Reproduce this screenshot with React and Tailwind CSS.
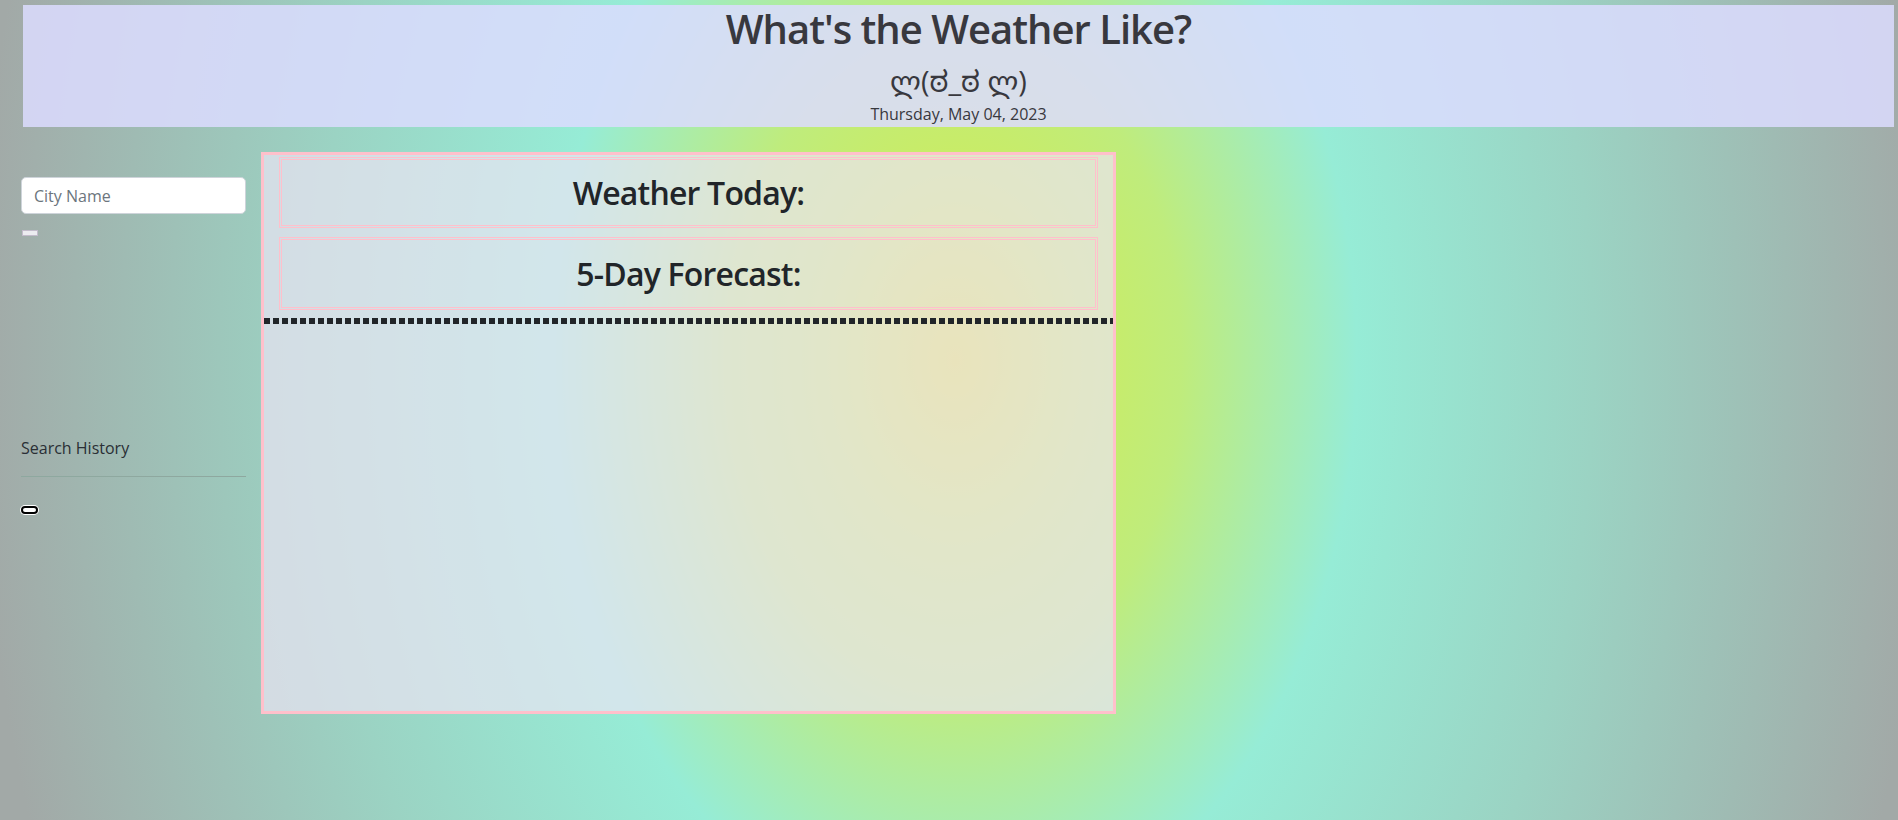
import { useState } from "react";

// fundo: elipse radial amarelo -> água -> cinza
const FUNDO =
  "bg-[radial-gradient(ellipse_1030px_1500px_at_955px_360px,#e4e23a_0%,#c9ec66_13%,#bfec7c_22%,#96ecd6_39%,#9bd3c3_62%,#a2a9a7_95%)]";

export default function App() {
  const [cidade, setCidade] = useState("");

  return (
    <div className={`min-h-[820px] w-full overflow-hidden font-['Open_Sans','Noto_Sans',sans-serif] ${FUNDO}`}>
      {/* Cabeçalho */}
      <header className="mt-[5px] ml-[23px] mr-[4px] h-[122px] bg-[rgba(220,220,255,0.85)] flex flex-col items-center text-[#38383e]">
        <h1 className="text-[40px] font-semibold leading-[48px] tracking-[-0.025em]">What's the Weather Like?</h1>
        <p className="mt-[10px] text-[29px] leading-[36px] font-['Open_Sans','DejaVu_Sans','Noto_Sans_Kannada','Noto_Sans',sans-serif]">
          ლ(ಠ_ಠ ლ)
        </p>
        <p className="mt-[3px] text-[16px] leading-[24px]">Thursday, May 04, 2023</p>
      </header>

      <div className="mt-[25px] flex items-start">
        {/* Barra lateral */}
        <aside className="ml-[21px] w-[225px] pt-[25px] flex flex-col">
          <input
            value={cidade}
            onChange={(e) => setCidade(e.target.value)}
            placeholder="City Name"
            className="h-[37px] w-full rounded-[5px] border border-[#ced4da] bg-white px-[12px] text-[16px] text-[#212529] placeholder:text-[#6c757d] outline-none"
          />
          <button className="mt-[16px] ml-[1px] w-[16px] h-[6px] border border-[#c3bccb] bg-[#ececf0]"></button>

          <p className="mt-[200px] text-[16px] leading-[24px] text-[#2a2f35]">Search History</p>
          <hr className="mt-[16px] border-0 border-t border-[#8ea89f]" />
          <div className="mt-[29px] w-[17px] h-[8px] rounded-full border-2 border-black bg-white shadow-[0_0_0_1px_#fff]"></div>
        </aside>

        {/* Painel principal */}
        <main className="ml-[15px] w-[855px] h-[562px] border-[3px] border-[#ffc0cb] bg-[rgba(235,228,243,0.7)] flex flex-col">
          <section className="mt-[2px] mx-[15px] h-[71px] border-[3px] border-double border-[#ffc0cb] flex items-center justify-center">
            <h2 className="text-[32px] font-semibold leading-[38px] tracking-[-0.025em] text-[#212529]">Weather Today:</h2>
          </section>
          <section className="mt-[9px] mx-[15px] h-[73px] border-[3px] border-double border-[#ffc0cb] flex items-center justify-center">
            <h2 className="text-[32px] font-semibold leading-[38px] tracking-[-0.025em] text-[#212529]">5-Day Forecast:</h2>
          </section>
          <div className="mt-[8px] h-[6px] w-full bg-[repeating-linear-gradient(90deg,#212529_0_6px,transparent_6px_9px)]"></div>
        </main>
      </div>
    </div>
  );
}
